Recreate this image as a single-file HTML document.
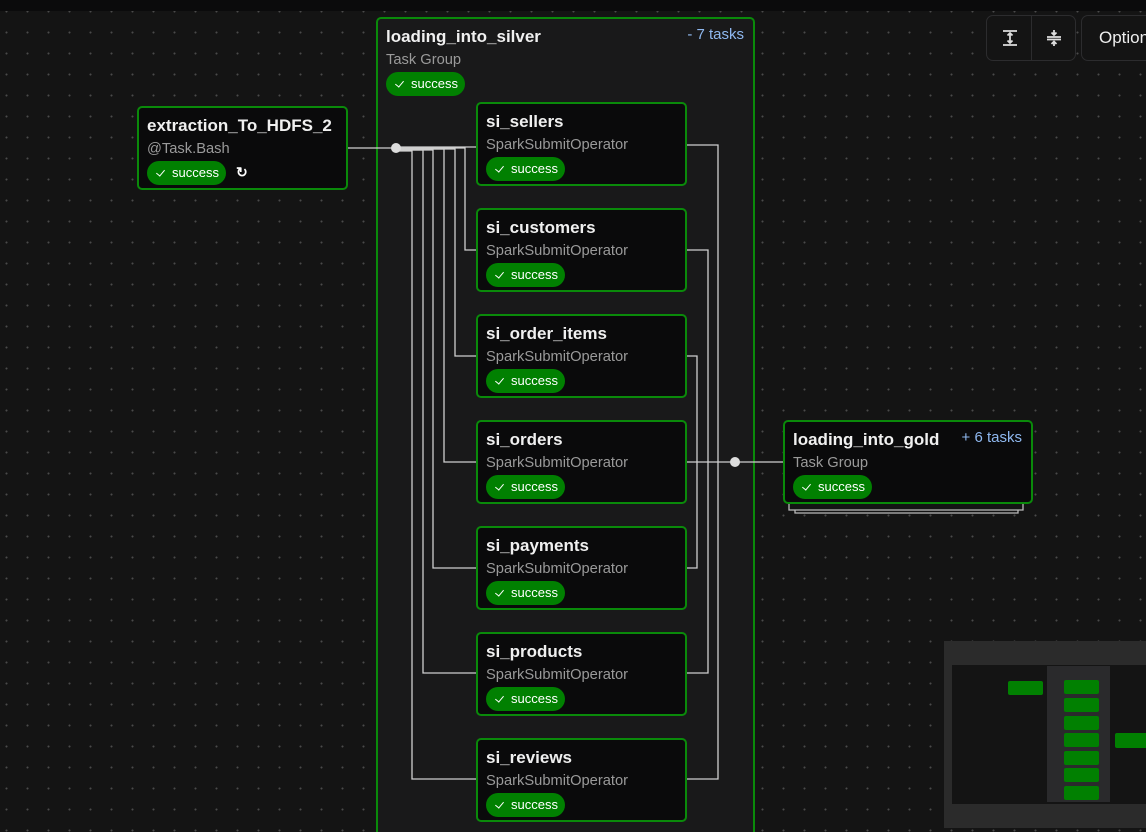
<!DOCTYPE html>
<html><head><meta charset="utf-8"><style>
html,body{margin:0;width:1146px;height:832px;overflow:hidden}
body{background:#141414;font-family:"Liberation Sans",sans-serif;position:relative}
.dots{position:absolute;inset:0;background-image:radial-gradient(circle,#4a4a4a 0.8px,transparent 1.2px);background-size:21px 21px;background-position:-4px 1px}
.top{position:absolute;left:0;top:0;width:1146px;height:11px;background:#0b0b0c}
.node{position:absolute;background:#0a0a0b;border:2px solid #0a8a0a;border-radius:5px;box-sizing:border-box;color:#eee}
.t{position:absolute;left:8px;top:8px;font-weight:bold;font-size:17px;color:#f0f0f0}
.s{position:absolute;left:8px;top:33px;font-size:14.7px;color:#9a9a9a}
.b{position:absolute;left:8px;top:53px;height:24px;width:79px;border-radius:12px;background:#018001;color:#fff;font-size:13px;line-height:24px;box-sizing:border-box;padding-left:25px}
.b:before{content:"";position:absolute;left:11px;top:7px;width:4px;height:7px;border:solid #fff;border-width:0 1.5px 1.5px 0;transform:rotate(40deg)}
.grp{position:absolute;left:376px;top:17px;width:379px;height:830px;border:2px solid #0a8a0a;border-radius:5px;background:#19191a;box-sizing:border-box}
.n{position:absolute;right:9px;top:7px;color:#8fb8ef;font-size:15px}
</style></head><body>
<div class="dots"></div><div class="top"></div>
<div class="grp"><div class="t">loading_into_silver</div><div class="s">Task Group</div><div class="b">success</div><div class="n">- 7 tasks</div></div>
<svg style="position:absolute;left:0;top:0" width="1146" height="832" fill="none" stroke="#cfcfcf" stroke-width="1.3">
<path d="M348 148H396"/>
<path d="M396 147H476"/>
<path d="M396 148H465V250H476"/>
<path d="M396 149H455V356H476"/>
<path d="M396 149H444V462H476"/>
<path d="M396 150H433V568H476"/>
<path d="M396 150H423V673H476"/>
<path d="M396 151H412V779H476"/>
<path d="M687 145H718V462"/>
<path d="M687 250H708V462"/>
<path d="M687 356H697V462"/>
<path d="M687 462H735"/>
<path d="M687 568H697V462"/>
<path d="M687 673H708V462"/>
<path d="M687 779H718V462"/>
<path d="M735 462H783"/>
<circle cx="396" cy="148" r="5" fill="#ddd" stroke="none"/>
<circle cx="735" cy="462" r="5" fill="#ddd" stroke="none"/>
<path d="M789 504V510H1023V504M795 510V513H1018V510" stroke="#bbb"/>
</svg>
<div class="node" style="left:137px;top:106px;width:211px;height:84px"><div class="t">extraction_To_HDFS_2</div><div class="s">@Task.Bash</div><div class="b">success</div><div style="position:absolute;left:97px;top:56px;color:#fff;font-size:14px;font-weight:bold">↻</div></div>
<div class="node" style="left:476px;top:102px;width:211px;height:84px"><div class="t">si_sellers</div><div class="s">SparkSubmitOperator</div><div class="b">success</div></div>
<div class="node" style="left:476px;top:208px;width:211px;height:84px"><div class="t">si_customers</div><div class="s">SparkSubmitOperator</div><div class="b">success</div></div>
<div class="node" style="left:476px;top:314px;width:211px;height:84px"><div class="t">si_order_items</div><div class="s">SparkSubmitOperator</div><div class="b">success</div></div>
<div class="node" style="left:476px;top:420px;width:211px;height:84px"><div class="t">si_orders</div><div class="s">SparkSubmitOperator</div><div class="b">success</div></div>
<div class="node" style="left:476px;top:526px;width:211px;height:84px"><div class="t">si_payments</div><div class="s">SparkSubmitOperator</div><div class="b">success</div></div>
<div class="node" style="left:476px;top:632px;width:211px;height:84px"><div class="t">si_products</div><div class="s">SparkSubmitOperator</div><div class="b">success</div></div>
<div class="node" style="left:476px;top:738px;width:211px;height:84px"><div class="t">si_reviews</div><div class="s">SparkSubmitOperator</div><div class="b">success</div></div>
<div class="node" style="left:783px;top:420px;width:250px;height:84px"><div class="t">loading_into_gold</div><div class="s">Task Group</div><div class="b">success</div><div class="n">+ 6 tasks</div></div>
<div style="position:absolute;left:986px;top:15px;width:90px;height:46px;border:1px solid #2c2c2e;border-radius:7px;background:#141414;box-sizing:border-box">
<div style="position:absolute;left:44px;top:0;width:1px;height:44px;background:#2c2c2e"></div>
<svg style="position:absolute;left:14px;top:13px" width="18" height="18" stroke="#ddd" stroke-width="1.8" fill="none"><path d="M2 2H16M2 16H16M9 4V14M6.5 6.5L9 4L11.5 6.5M6.5 11.5L9 14L11.5 11.5"/></svg>
<svg style="position:absolute;left:58px;top:13px" width="18" height="18" stroke="#ddd" stroke-width="1.8" fill="none"><path d="M2 8H16M2 10.5H16M9 1V6M6.5 3.5L9 6L11.5 3.5M9 17V12.5M6.5 15L9 12.5L11.5 15"/></svg>
</div>
<div style="position:absolute;left:1081px;top:15px;width:80px;height:46px;border:1px solid #2c2c2e;border-radius:7px;background:#141414;box-sizing:border-box;color:#eee;font-size:17px;line-height:44px;padding-left:17px">Options</div>
<div style="position:absolute;left:944px;top:641px;width:202px;height:187px;background:#2b2b2b">
<div style="position:absolute;left:8px;top:24px;width:194px;height:139px;background:#141414"></div>
<div style="position:absolute;left:103px;top:25px;width:63px;height:136px;background:#2a2a2c"></div>
<div style="position:absolute;left:64px;top:40px;width:35px;height:14px;background:#018001;border-radius:2px"></div>
<div style="position:absolute;left:120px;top:39px;width:35px;height:14px;background:#018001;border-radius:2px;box-shadow:0 18px #018001,0 36px #018001,0 53px #018001,0 71px #018001,0 88px #018001,0 106px #018001"></div>
<div style="position:absolute;left:171px;top:92px;width:35px;height:15px;background:#018001;border-radius:2px"></div>
</div>
</body></html>
